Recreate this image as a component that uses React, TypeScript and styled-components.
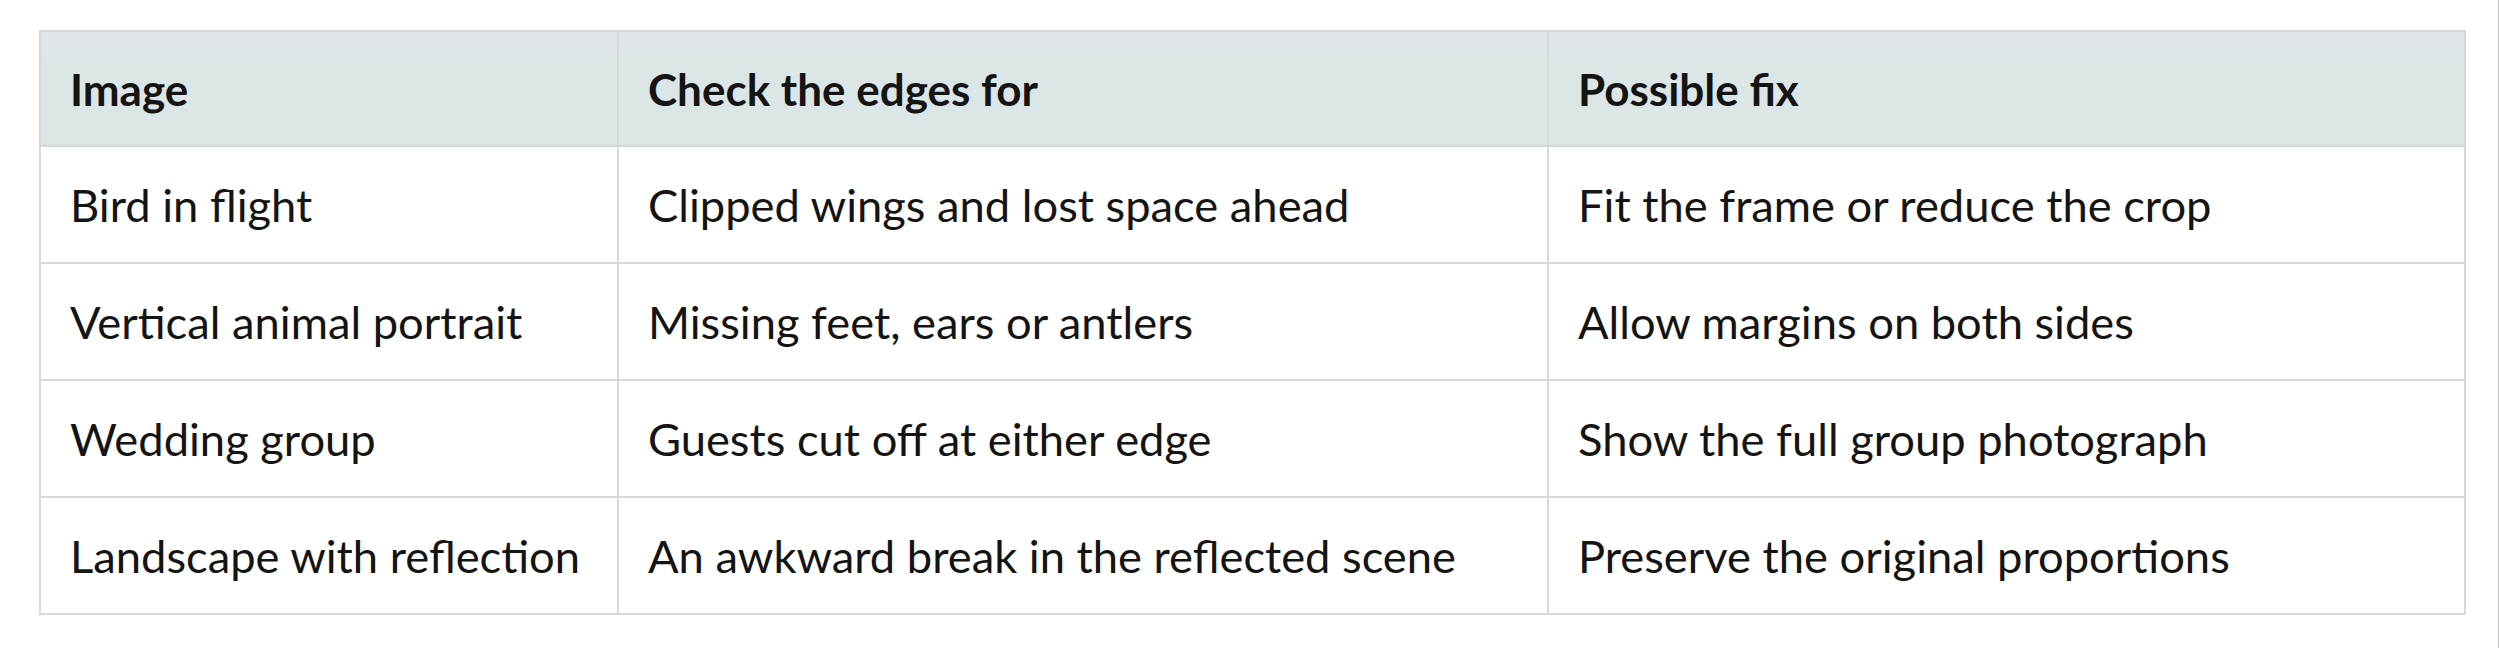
import React from "react";
import styled, { createGlobalStyle } from "styled-components";

const GlobalStyle = createGlobalStyle`
  html, body {
    margin: 0;
    padding: 0;
    background: #ffffff;
  }
`;

const rows = [
  ["Bird in flight", "Clipped wings and lost space ahead", "Fit the frame or reduce the crop"],
  ["Vertical animal portrait", "Missing feet, ears or antlers", "Allow margins on both sides"],
  ["Wedding group", "Guests cut off at either edge", "Show the full group photograph"],
  ["Landscape with reflection", "An awkward break in the reflected scene", "Preserve the original proportions"],
];

export default function App() {
  return (
    <>
      <GlobalStyle />
      <Page>
        <Table>
          <colgroup>
            <Col $width={578} />
            <Col $width={930} />
            <Col $width={917} />
          </colgroup>
          <thead>
            <tr>
              <HeadCell>Image</HeadCell>
              <HeadCell>Check the edges for</HeadCell>
              <HeadCell>Possible fix</HeadCell>
            </tr>
          </thead>
          <tbody>
            {rows.map((row) => (
              <tr key={row[0]}>
                {row.map((text) => (
                  <Cell key={text}>{text}</Cell>
                ))}
              </tr>
            ))}
          </tbody>
        </Table>
      </Page>
    </>
  );
}

const Page = styled.div`
  width: 2499px;
  height: 648px;
  box-sizing: border-box;
  padding: 30px 0 0 39px;
  border-right: 1px solid #c4c4c4;
  background: #ffffff;
  overflow: hidden;
`;

const Table = styled.table`
  border-collapse: collapse;
  table-layout: fixed;
  width: 2425px;
  border: 2px solid #d7d7d7;
  font-family: Lato, "Liberation Sans", sans-serif;
  color: #141414;
`;

const Col = styled.col<{ $width: number }>`
  width: ${(p) => p.$width}px;
`;

const HeadCell = styled.th`
  height: 115px;
  padding: 0 0 0 29px;
  text-align: left;
  vertical-align: middle;
  font-size: 44px;
  font-weight: 700;
  background: linear-gradient(180deg, #e1e5ea 0%, #dce6e6 40%, #dbe6e5 100%);
  border: 2px solid #d5d7d8;
  box-sizing: border-box;
`;

const Cell = styled.td`
  height: 115px;
  padding: 0 0 0 29px;
  vertical-align: middle;
  font-size: 45.3px;
  font-weight: 400;
  border: 2px solid #d9d9d9;
  white-space: nowrap;
`;
